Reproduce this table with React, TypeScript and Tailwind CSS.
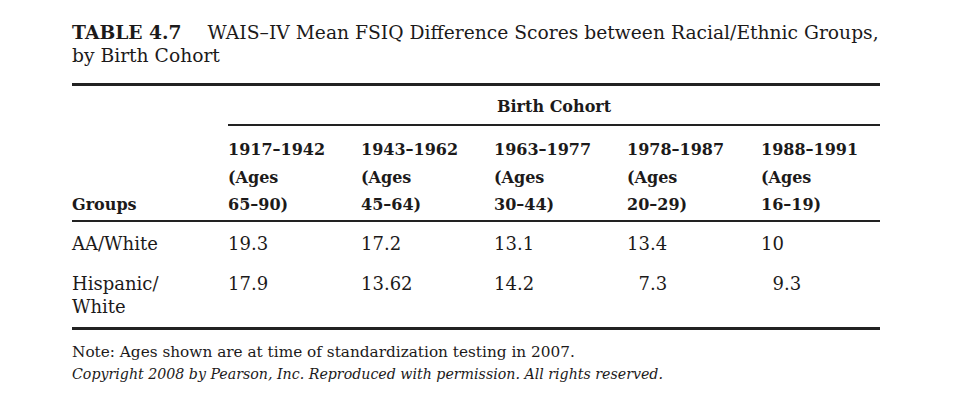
const serif = { fontFamily: '"DejaVu Serif", "Liberation Serif", serif' };

const years = [
    { span: '1917–1942', ages: '65–90)' },
    { span: '1943–1962', ages: '45–64)' },
    { span: '1963–1977', ages: '30–44)' },
    { span: '1978–1987', ages: '20–29)' },
    { span: '1988–1991', ages: '16–19)' },
];

const rows = [
    { group: ['AA/White'], values: ['19.3', '17.2', '13.1', '13.4', '10'] },
    { group: ['Hispanic/', 'White'], values: ['17.9', '13.62', '14.2', '\u20077.3', '\u20079.3'] },
];

export default function App() {
    return (
        <div className="h-[417px] w-[973px] bg-white text-[#1c1a1a]" style={serif}>
            <div className="w-[880px] pt-[21px] pl-[72px]">
                <h1 className="whitespace-nowrap text-[18.7px] leading-[23px]">
                    <div>
                        <span className="font-bold">TABLE 4.7</span>
                        <span className="ml-[26px]">WAIS–IV Mean FSIQ Difference Scores between Racial/Ethnic Groups,</span>
                    </div>
                    <div>by Birth Cohort</div>
                </h1>

                <div className="mt-[16px] border-t-[3px] border-[#222]">
                    {/* head */}
                    <div className="grid grid-cols-[156px_133px_133px_133px_134px_119px] text-[16px] font-bold">
                        <div />
                        <div className="col-span-5 border-b-2 border-[#222] pt-[10px] pb-[7px] pl-[269px] leading-[21px]">Birth Cohort</div>
                        <div className="flex items-end pb-[1px] leading-[27.5px]">Groups</div>
                        {years.map((y) => (
                            <div key={y.span} className="pt-[10px] pb-[1px] leading-[27.5px]">
                                <div>{y.span}</div>
                                <div>(Ages</div>
                                <div>{y.ages}</div>
                            </div>
                        ))}
                    </div>

                    <div className="flex flex-col gap-[17px] border-t-2 border-[#222] pt-[10px] pb-[9px]">
                        {rows.map((r) => (
                            <div key={r.group[0]} className="grid grid-cols-[156px_133px_133px_133px_134px_119px] text-[18px] leading-[23px]">
                                <div>
                                    {r.group.map((g) => (
                                        <div key={g}>{g}</div>
                                    ))}
                                </div>
                                {r.values.map((v, i) => (
                                    <div key={i} className="whitespace-pre">{v}</div>
                                ))}
                            </div>
                        ))}
                    </div>
                </div>

                <div className="border-t-[3px] border-[#222] pt-[11px] text-[15.3px] leading-[22px] whitespace-nowrap">
                    <div>Note: Ages shown are at time of standardization testing in 2007.</div>
                    <div className="text-[14.2px] italic">Copyright 2008 by Pearson, Inc. Reproduced with permission. All rights reserved.</div>
                </div>
            </div>
        </div>
    );
}
